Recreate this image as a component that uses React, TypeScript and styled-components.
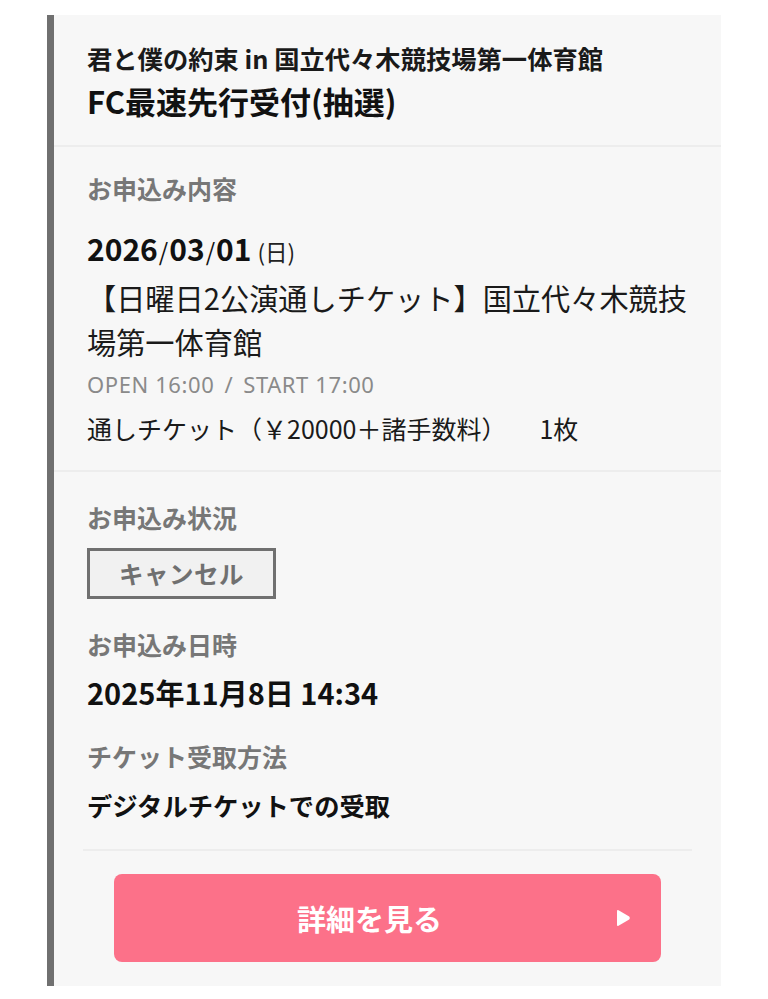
import React from "react";
import styled, { createGlobalStyle } from "styled-components";

const GlobalStyle = createGlobalStyle`
  html, body {
    margin: 0;
    padding: 0;
    background: #ffffff;
  }
  body {
    font-family: "Noto Sans CJK JP", "Noto Sans", sans-serif;
    color: #1a1a1a;
    -webkit-font-smoothing: antialiased;
  }
`;

const Page = styled.div`
  padding: 15px 0 14px 47px;
`;

const Card = styled.article`
  width: 667px;
  background: #f7f7f7;
  border-left: 7px solid #707070;
  display: flex;
  flex-direction: column;
`;

const Header = styled.header`
  padding: 26px 29px 24px 33px;
  border-bottom: 2px solid #ededed;
`;

const EventName = styled.div`
  font-size: 25.3px;
  font-weight: 700;
  line-height: 35px;
  color: #1a1a1a;
`;

const SaleName = styled.div`
  font-size: 31px;
  font-weight: 700;
  line-height: 40px;
  margin-top: 5px;
  color: #111;
`;

const Section = styled.section<{ $pt: number; $pb: number; $divider?: boolean }>`
  padding: ${(p) => p.$pt}px 29px ${(p) => p.$pb}px 33px;
  border-bottom: ${(p) => (p.$divider ? "2px solid #ededed" : "none")};
  display: flex;
  flex-direction: column;
  align-items: flex-start;
`;

const Label = styled.div<{ $mt?: number }>`
  font-size: 25px;
  font-weight: 700;
  line-height: 36px;
  color: #777777;
  margin-top: ${(p) => p.$mt ?? 0}px;
`;

const DateRow = styled.div<{ $mt?: number }>`
  display: flex;
  align-items: baseline;
  height: 44px;
  line-height: 44px;
  margin-top: ${(p) => p.$mt ?? 0}px;
`;

const DateNum = styled.span`
  font-size: 30px;
  font-weight: 700;
  color: #111;
`;

const DateSlash = styled.span`
  font-size: 24px;
  font-weight: 400;
  color: #111;
  margin: 0 1px;
`;

const DayOfWeek = styled.span`
  font-size: 22.5px;
  font-weight: 400;
  color: #222;
  margin-left: 6px;
`;

const Venue = styled.div<{ $mt?: number }>`
  font-size: 29.2px;
  font-weight: 400;
  line-height: 44px;
  color: #1a1a1a;
  margin-top: ${(p) => p.$mt ?? 0}px;
`;

const TimeInfo = styled.div<{ $mt?: number }>`
  font-family: "Noto Sans", "Lato", sans-serif;
  font-size: 22px;
  font-weight: 400;
  letter-spacing: 0.6px;
  line-height: 30px;
  color: #8a8a8a;
  margin-top: ${(p) => p.$mt ?? 0}px;
`;

const TimeSep = styled.span`
  margin: 0 10px;
`;

const TicketLine = styled.div<{ $mt?: number }>`
  font-size: 25px;
  font-weight: 400;
  line-height: 36px;
  color: #1a1a1a;
  margin-top: ${(p) => p.$mt ?? 0}px;
`;

const Count = styled.span`
  margin-left: 33px;
`;

const StatusBadge = styled.div<{ $mt?: number }>`
  box-sizing: border-box;
  width: 189px;
  height: 51px;
  border: 3px solid #707070;
  background: #f1f1f1;
  display: flex;
  align-items: center;
  justify-content: center;
  font-size: 24.5px;
  font-weight: 700;
  color: #707070;
  letter-spacing: 0.5px;
  margin-top: ${(p) => p.$mt ?? 0}px;
`;

const StrongValue = styled.div<{ $mt?: number; $size: number; $lh: number }>`
  font-size: ${(p) => p.$size}px;
  font-weight: 700;
  line-height: ${(p) => p.$lh}px;
  color: #111;
  margin-top: ${(p) => p.$mt ?? 0}px;
`;

const Footer = styled.div`
  padding: 0 29px 24px 29px;
  display: flex;
  flex-direction: column;
  align-items: stretch;
`;

const Rule = styled.hr`
  border: none;
  height: 2px;
  background: #ededed;
  margin: 0 0 23px 0;
`;

const DetailButton = styled.button`
  position: relative;
  box-sizing: border-box;
  align-self: center;
  width: 547px;
  height: 88px;
  border: none;
  border-radius: 8px;
  background: #fc7189;
  color: #ffffff;
  font-family: "Noto Sans CJK JP", "Noto Sans", sans-serif;
  font-size: 29px;
  font-weight: 700;
  display: flex;
  align-items: center;
  justify-content: center;
  padding: 0 36px 0 0;
  cursor: pointer;
`;

const Arrow = styled.svg`
  position: absolute;
  right: 30px;
  top: 50%;
  width: 15px;
  height: 18px;
  transform: translateY(-50%);
`;

export default function App() {
  return (
    <>
      <GlobalStyle />
      <Page>
        <Card>
          <Header>
            <EventName>君と僕の約束 in 国立代々木競技場第一体育館</EventName>
            <SaleName>FC最速先行受付(抽選)</SaleName>
          </Header>

          <Section $pt={23} $pb={24} $divider>
            <Label>お申込み内容</Label>
            <DateRow $mt={20}>
              <DateNum>2026</DateNum>
              <DateSlash>/</DateSlash>
              <DateNum>03</DateNum>
              <DateSlash>/</DateSlash>
              <DateNum>01</DateNum>
              <DayOfWeek>(日)</DayOfWeek>
            </DateRow>
            <Venue $mt={5}>【日曜日2公演通しチケット】国立代々木競技場第一体育館</Venue>
            <TimeInfo $mt={6}>
              OPEN 16:00<TimeSep>/</TimeSep>START 17:00
            </TimeInfo>
            <TicketLine $mt={11}>
              通しチケット（￥20000＋諸手数料）<Count>1枚</Count>
            </TicketLine>
          </Section>

          <Section $pt={27} $pb={26}>
            <Label>お申込み状況</Label>
            <StatusBadge $mt={13}>キャンセル</StatusBadge>
            <Label $mt={27}>お申込み日時</Label>
            <StrongValue $mt={8} $size={29} $lh={44}>
              2025年11月8日 14:34
            </StrongValue>
            <Label $mt={24}>チケット受取方法</Label>
            <StrongValue $mt={13} $size={25.3} $lh={36}>
              デジタルチケットでの受取
            </StrongValue>
          </Section>

          <Footer>
            <Rule />
            <DetailButton type="button">
              詳細を見る
              <Arrow viewBox="0 0 15 18" aria-hidden="true">
                <path
                  d="M2.5 1.2 L13.2 7.6 Q14.6 9 13.2 10.4 L2.5 16.8 Q1 17.6 1 15.8 V2.2 Q1 0.4 2.5 1.2 Z"
                  fill="#ffffff"
                />
              </Arrow>
            </DetailButton>
          </Footer>
        </Card>
      </Page>
    </>
  );
}
